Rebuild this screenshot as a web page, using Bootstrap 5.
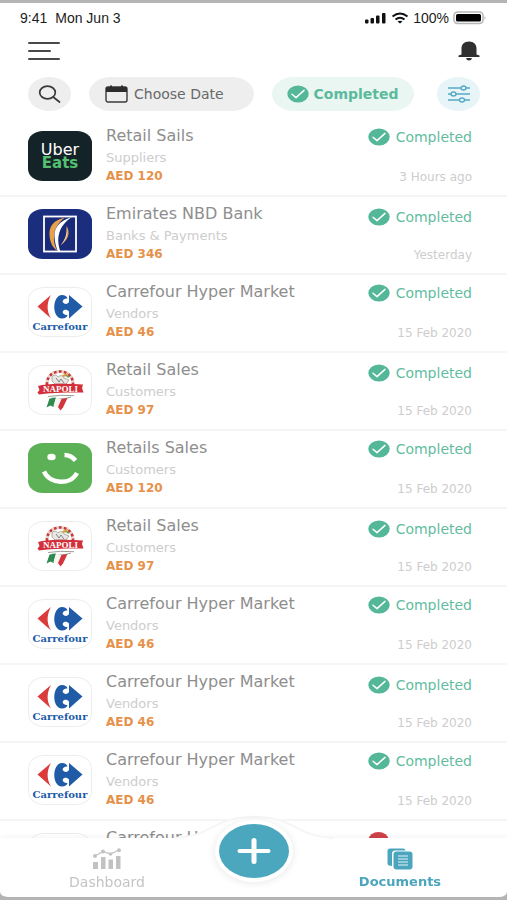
<!DOCTYPE html>
<html lang="en">
<head>
<meta charset="utf-8">
<meta name="viewport" content="width=device-width, initial-scale=1">
<title>Documents</title>
<link href="https://cdn.jsdelivr.net/npm/bootstrap@5.3.0/dist/css/bootstrap.min.css" rel="stylesheet">
<style>
  body { font-family: "DejaVu Sans", Inter, sans-serif; background: #b4b4b4; color: #7d7d7d; }
  svg { display: block; flex: none; }
  .screen { border-top: 3px solid #b4b4b4; }
  .statusbar { font: 14px/20px "Liberation Sans", Arial, sans-serif; color: #1c1c1c; padding: 5px 20px 0; }
  .topbar { padding: 12px 27px 0 28px; height: 42px; }
  .filters { padding: 7px 27px 8px 28px; gap: 18px; }
  .pill { border: 0; height: 34px; border-radius: 22px / 17px; background: #eeeeee; font-size: 14px; line-height: 20px; white-space: nowrap; }
  .pill-round { width: 43px; }
  .pill-date { width: 165px; color: #686868; gap: 6px; padding: 0 16px; }
  .pill-done { width: 142px; background: #e9f6f2; color: #5cba9c; font-weight: 600; gap: 4px; }
  .pill-tune { background: #e8f5f8; }
  .doc { height: 78px; padding: 7px 35px 0 28px; gap: 14px; border-bottom: 2px solid #f5f5f5; }
  .logo { margin-top: 5px; }
  .doc-title { font-size: 16px; line-height: 20px; color: #8e8e8e; }
  .doc-kind { font-size: 13px; line-height: 18px; margin-top: 3px; color: #cdcdcd; }
  .doc-sum { font-size: 12px; line-height: 18px; font-weight: 600; color: #e6914a; }
  .doc-state { font-size: 14px; line-height: 20px; margin-top: 1px; gap: 6px; color: #62bd9f; }
  .doc:nth-child(even) .doc-state { margin-top: 3px; margin-bottom: -2px; }
  .doc-date { font-size: 12px; line-height: 18px; margin-top: 21px; color: #cdcdcd; }
  .state-off { width: 104px; }
  .tabs { height: 62px; background: #fff; border-bottom: 3px solid #b4b4b4; border-radius: 0 0 8px 8px; box-shadow: 0 -2px 5px rgba(0,0,0,.04); }
  .backing { height: 62px; background: #b4b4b4; }
  .tab { padding-top: 10px; font-size: 14px; line-height: 18px; color: #c4c4c4; gap: 3px; }
  .tab.on { color: #4ba5bd; font-size: 13px; font-weight: 600; }
  .slot { width: 79px; }
  .bulge { left: 50%; top: -24px; transform: translateX(-50%); }
  .add { left: 50%; top: -14px; transform: translateX(-50%); width: 70px; height: 54px; border-radius: 50%; background: #4ba7be; box-shadow: 0 0 0 4px #fff, 0 1px 7px 5px rgba(0,0,0,.08); z-index: 2; }
</style>
<script src="https://cdn.jsdelivr.net/npm/bootstrap@5.3.0/dist/js/bootstrap.bundle.min.js"></script>
</head>
<body>

<svg class="d-none" aria-hidden="true">
  <symbol id="tick" viewBox="0 0 22 18">
    <ellipse cx="11" cy="9" rx="10.7" ry="8.6" fill="#54b798"/>
    <path d="M5 9.2 9 12.6 17 5.4" fill="none" stroke="#fff" stroke-width="1.5" stroke-linecap="round" stroke-linejoin="round"/>
  </symbol>
  <symbol id="uber" viewBox="0 0 64 50">
    <rect width="64" height="50" rx="15" ry="12" fill="#142328"/>
    <text x="32" y="24" text-anchor="middle" font-size="16" fill="#fff">Uber</text>
    <text x="32" y="37" text-anchor="middle" font-size="15" font-weight="700" fill="#55c070">Eats</text>
  </symbol>
  <symbol id="enbd" viewBox="0 0 64 50">
    <rect width="64" height="50" rx="15" ry="12" fill="#1b2e7e"/>
    <rect x="16" y="7.5" width="32" height="35" fill="#182a78" stroke="#fff" stroke-width="1.8"/>
    <path d="M37 8.500C25 11 21 18 21.500 26C22 34 25 39 29.500 42C24 32 24 18 37 8.500Z" fill="#e8a04a"/>
    <path d="M44 8C30 12 26 20 26.500 28C27 34 28 38 30 42.500H32.500C28 30 30 17 44 8Z" fill="#fff"/>
    <path d="M38.500 17C43 24 40 31 32.500 36.500C38 30 39.500 25 38.500 17Z" fill="#e8a04a"/>
    <path d="M38.500 17C39.500 25 37 31 32.500 36.500C37 32 41 27 38.500 17Z" fill="#f6dfc4"/>
  </symbol>
  <symbol id="carrefour" viewBox="0 0 64 50">
    <rect x=".5" y=".5" width="63" height="49" rx="15" ry="12" fill="#fff" stroke="#ececec"/>
    <path d="M23 8 9.500 19.500 23 31.500C18.500 24 18.500 16 23 8Z" fill="#dc3b3b"/>
    <path d="M34 8C24 8 23.500 31.500 34 31.500C37 31.500 39 30 39.500 28C36 28 34 26 35 24C36.500 22 39.500 22.500 41 24.500V31.500L54.500 19.500 41 8V15C39.500 17.500 36.500 17.500 35 15.500C34 13.500 36 11.500 39.500 11.500C39 9.500 37 8 34 8Z" fill="#205ba8"/>
    <text x="32" y="43" text-anchor="middle" font-family="'DejaVu Serif', 'Liberation Serif', serif" font-size="10" font-weight="700" fill="#205ba8">Carrefour</text>
  </symbol>
  <symbol id="napoli" viewBox="0 0 64 50">
    <rect x=".5" y=".5" width="63" height="49" rx="15" ry="12" fill="#fff" stroke="#ececec"/>
    <path d="M19 20C18 2 46 2 45 20" fill="none" stroke="#e9cfc4" stroke-width="3"/>
    <path d="M19 20C18 2 46 2 45 20" fill="none" stroke="#c8353c" stroke-width="2.600" stroke-dasharray="2.600 2.400"/>
    <path d="M24 12c2-3 5-2 6 0 2-2 5-2 6 1l5 2-3 4H27l-3-3z" fill="#e9e7e3" stroke="#9c9c98" stroke-width=".8"/>
    <path d="M28 13l3 4 2-3 3 4" fill="none" stroke="#777" stroke-width=".9"/>
    <path d="M34 10l6-2-1 3-4 1z" fill="#d9a13c"/><path d="M37 10l5 1-2 2z" fill="#69994e"/>
    <path d="M10 21 14 20C27 18.500 40 18.500 55 19.500L54 23 55.500 27.500C40 27.500 27 27.500 11 29.500L9.500 27.500 11.500 25Z" fill="#d32f3a"/>
    <text x="32.500" y="26.500" text-anchor="middle" font-family="'Liberation Serif', serif" font-size="9" font-weight="700" fill="#fff">NAPOLI</text>
    <path d="M20 31.500q12-2 26-.8M24 33q11 2 19-1" fill="none" stroke="#9aa094" stroke-width="1"/>
    <path d="M21.500 33.500 28 32.500 25.500 42 22.500 40.500 18.500 42.500Z" fill="#2f8a50"/>
    <path d="M28 32.500 34 34 31.500 43 25.500 41Z" fill="#f6f4f0"/>
    <path d="M33.500 34 39.500 33 35 42.500 32.500 45.500 30 42Z" fill="#d3353d"/>
  </symbol>
  <symbol id="careem" viewBox="0 0 64 50">
    <rect width="64" height="50" rx="15" ry="12" fill="#5cb157"/>
    <ellipse cx="23.500" cy="14" rx="4.200" ry="3.300" fill="#fff"/>
    <path d="M36.500 12Q43 12 47.500 17.500" fill="none" stroke="#fff" stroke-width="4.400"/>
    <path d="M16 28.500C22 42 43 42 49 30" fill="none" stroke="#fff" stroke-width="4.400"/>
  </symbol>
</svg>

<div class="screen bg-white vh-100 overflow-hidden d-flex flex-column">
  <header>
    <div class="statusbar d-flex justify-content-between align-items-center">
      <div class="d-flex gap-2"><span>9:41</span><span>Mon Jun 3</span></div>
      <div class="d-flex align-items-center gap-1">
        <svg width="22" height="12" viewBox="0 0 22 12" fill="#111"><rect x="0" y="7.500" width="3.500" height="4" rx="1"/><rect x="5.500" y="6" width="3.500" height="5.500" rx="1"/><rect x="11" y="3.500" width="3.500" height="8" rx="1"/><rect x="17" y="1" width="3.500" height="10.500" rx="1"/></svg>
        <svg width="18" height="12" viewBox="0 0 18 12" fill="none" stroke="#111" stroke-width="2"><path d="M1.500 4.500Q9-1.500 16.500 4.500M4.500 7.500Q9 4 13.500 7.500"/><path d="M6.500 9.500 9 11.500 11.500 9.500Q9 8 6.500 9.500Z" fill="#111" stroke="none"/></svg>
        <span>100%</span>
        <svg width="34" height="14" viewBox="0 0 34 14"><rect x="1" y="1" width="29" height="11.500" rx="3.500" fill="#fff" stroke="#b5b5b5" stroke-width="1.500"/><rect x="3" y="3" width="25" height="7.500" rx="1.500" fill="#000"/><path d="M31.500 5v4q2-2 0-4" fill="#b5b5b5"/></svg>
      </div>
    </div>
    <div class="topbar d-flex justify-content-between align-items-start">
      <button class="btn p-0 border-0" type="button" aria-label="Menu"><svg width="32" height="22" viewBox="0 0 32 22" stroke="#484848" stroke-width="2" stroke-linecap="round"><path d="M1 3H31M1 11H22M1 19H31"/></svg></button>
      <button class="btn p-0 border-0" type="button" aria-label="Notifications"><svg width="22" height="22" viewBox="0 0 22 22" fill="#303030"><path d="M11 1.500C6 1.500 3.500 4.500 3.500 8.500V14.500L.5 15.500V17H21.500V15.500L18.500 14.500V8.500C18.500 4.500 16 1.500 11 1.500Z"/><path d="M8 18H14Q13.500 20.500 11 20.500T8 18Z"/></svg></button>
    </div>
    <div class="filters d-flex">
      <button class="pill pill-round d-flex align-items-center justify-content-center p-0" type="button" aria-label="Search"><svg width="23" height="18" viewBox="0 0 23 18" fill="none" stroke="#3a3a3a" stroke-width="1.700" stroke-linecap="round"><ellipse cx="9.500" cy="7.500" rx="7.800" ry="6.400"/><path d="M15.200 12 21.500 17"/></svg></button>
      <button class="pill pill-date d-flex align-items-center" type="button"><svg width="23" height="18" viewBox="0 0 23 18"><rect x="1" y="2" width="21" height="15" rx="2" fill="none" stroke="#3a3a3a" stroke-width="1.400"/><path d="M1 3Q1 2 3 2H20Q22 2 22 3V7H1Z" fill="#2d2d2d"/><path d="M6 .5V3M17 .5V3" stroke="#2d2d2d" stroke-width="2"/></svg>Choose Date</button>
      <button class="pill pill-done d-flex align-items-center justify-content-center p-0" type="button"><svg width="22" height="18"><use href="#tick"/></svg>Completed</button>
      <button class="pill pill-round pill-tune ms-auto d-flex align-items-center justify-content-center p-0" type="button" aria-label="Filters"><svg width="22" height="18" viewBox="0 0 22 18" fill="#e8f5f8" stroke="#55a9c4" stroke-width="1.400"><path d="M0 3H22M0 9H22M0 15H22"/><ellipse cx="15.500" cy="3" rx="2.500" ry="2"/><ellipse cx="5.500" cy="9" rx="2.500" ry="2"/><ellipse cx="14" cy="15" rx="2.500" ry="2"/></svg></button>
    </div>
  </header>

  <main class="flex-grow-1 overflow-hidden">
    <ul class="list-unstyled m-0">
      <li class="doc d-flex"><svg class="logo" width="64" height="50"><use href="#uber"/></svg><div class="flex-grow-1"><div class="doc-title">Retail Sails</div><div class="doc-kind">Suppliers</div><div class="doc-sum">AED 120</div></div><div class="text-end"><div class="doc-state d-flex align-items-center"><svg width="22" height="18"><use href="#tick"/></svg>Completed</div><div class="doc-date">3 Hours ago</div></div></li>
      <li class="doc d-flex"><svg class="logo" width="64" height="50"><use href="#enbd"/></svg><div class="flex-grow-1"><div class="doc-title">Emirates NBD Bank</div><div class="doc-kind">Banks &amp; Payments</div><div class="doc-sum">AED 346</div></div><div class="text-end"><div class="doc-state d-flex align-items-center"><svg width="22" height="18"><use href="#tick"/></svg>Completed</div><div class="doc-date">Yesterday</div></div></li>
      <li class="doc d-flex"><svg class="logo" width="64" height="50"><use href="#carrefour"/></svg><div class="flex-grow-1"><div class="doc-title">Carrefour Hyper Market</div><div class="doc-kind">Vendors</div><div class="doc-sum">AED 46</div></div><div class="text-end"><div class="doc-state d-flex align-items-center"><svg width="22" height="18"><use href="#tick"/></svg>Completed</div><div class="doc-date">15 Feb 2020</div></div></li>
      <li class="doc d-flex"><svg class="logo" width="64" height="50"><use href="#napoli"/></svg><div class="flex-grow-1"><div class="doc-title">Retail Sales</div><div class="doc-kind">Customers</div><div class="doc-sum">AED 97</div></div><div class="text-end"><div class="doc-state d-flex align-items-center"><svg width="22" height="18"><use href="#tick"/></svg>Completed</div><div class="doc-date">15 Feb 2020</div></div></li>
      <li class="doc d-flex"><svg class="logo" width="64" height="50"><use href="#careem"/></svg><div class="flex-grow-1"><div class="doc-title">Retails Sales</div><div class="doc-kind">Customers</div><div class="doc-sum">AED 120</div></div><div class="text-end"><div class="doc-state d-flex align-items-center"><svg width="22" height="18"><use href="#tick"/></svg>Completed</div><div class="doc-date">15 Feb 2020</div></div></li>
      <li class="doc d-flex"><svg class="logo" width="64" height="50"><use href="#napoli"/></svg><div class="flex-grow-1"><div class="doc-title">Retail Sales</div><div class="doc-kind">Customers</div><div class="doc-sum">AED 97</div></div><div class="text-end"><div class="doc-state d-flex align-items-center"><svg width="22" height="18"><use href="#tick"/></svg>Completed</div><div class="doc-date">15 Feb 2020</div></div></li>
      <li class="doc d-flex"><svg class="logo" width="64" height="50"><use href="#carrefour"/></svg><div class="flex-grow-1"><div class="doc-title">Carrefour Hyper Market</div><div class="doc-kind">Vendors</div><div class="doc-sum">AED 46</div></div><div class="text-end"><div class="doc-state d-flex align-items-center"><svg width="22" height="18"><use href="#tick"/></svg>Completed</div><div class="doc-date">15 Feb 2020</div></div></li>
      <li class="doc d-flex"><svg class="logo" width="64" height="50"><use href="#carrefour"/></svg><div class="flex-grow-1"><div class="doc-title">Carrefour Hyper Market</div><div class="doc-kind">Vendors</div><div class="doc-sum">AED 46</div></div><div class="text-end"><div class="doc-state d-flex align-items-center"><svg width="22" height="18"><use href="#tick"/></svg>Completed</div><div class="doc-date">15 Feb 2020</div></div></li>
      <li class="doc d-flex"><svg class="logo" width="64" height="50"><use href="#carrefour"/></svg><div class="flex-grow-1"><div class="doc-title">Carrefour Hyper Market</div><div class="doc-kind">Vendors</div><div class="doc-sum">AED 46</div></div><div class="text-end"><div class="doc-state d-flex align-items-center"><svg width="22" height="18"><use href="#tick"/></svg>Completed</div><div class="doc-date">15 Feb 2020</div></div></li>
      <li class="doc d-flex"><svg class="logo" width="64" height="50"><use href="#carrefour"/></svg><div class="flex-grow-1"><div class="doc-title">Carrefour Hyper Market</div></div><div class="doc-state state-off d-flex align-items-start"><svg width="22" height="18" viewBox="0 0 22 18"><ellipse cx="10.500" cy="9" rx="10" ry="8" fill="#cf4248"/></svg></div></li>
    </ul>
  </main>
</div>

<div class="backing fixed-bottom"></div>
<nav class="tabs fixed-bottom d-flex" aria-label="Main">
  <svg class="bulge position-absolute" width="160" height="62" viewBox="0 0 160 62"><path d="M0 24C40 22 38 3 80 3S120 22 160 24" fill="#fff" stroke="#f6f6f6" stroke-width="2"/><path d="M0 25H160V61H0Z" fill="#fff"/></svg>
  <a href="#dashboard" class="tab position-relative flex-fill w-50 d-flex flex-column align-items-center text-decoration-none"><svg width="30" height="22" viewBox="0 0 30 22" fill="#c2c2c2"><path d="M1 14H6V21H1ZM9 9H13.500V21H9ZM16.500 11.500H21V21H16.500ZM24 8H28.500V21H24Z"/><path d="M3 8 11 3.500 18.500 6 27 2" fill="none" stroke="#c2c2c2" stroke-width="1.200"/><circle cx="3" cy="8" r="2"/><circle cx="11" cy="3.500" r="2"/><circle cx="18.500" cy="6" r="1.800"/><circle cx="27" cy="2.300" r="2"/></svg>Dashboard</a>
  <div class="slot flex-shrink-0"></div>
  <a href="#documents" class="tab on position-relative flex-fill w-50 d-flex flex-column align-items-center text-decoration-none" aria-current="page"><svg width="26" height="22" viewBox="0 0 26 22"><path d="M2 17.500Q.5 17 .5 15V3Q.5.5 3 .5H16Q18.500.5 18.500 2.500H8Q5 2.500 5 6V18Z" fill="#4ba5bd"/><rect x="6.500" y="3.500" width="19" height="18" rx="3" fill="#4ba5bd"/><path d="M11 8H21M11 11H21M11 14H21M11 17H21" stroke="#e6f4f7" stroke-width="1.200"/></svg>Documents</a>
  <button class="add btn p-0 border-0 position-absolute d-flex align-items-center justify-content-center" type="button" aria-label="Add document"><svg width="34" height="26" viewBox="0 0 34 26" stroke="#fff" stroke-linecap="round"><path d="M2.500 13H31.500" stroke-width="4"/><path d="M17 2.500V23.500" stroke-width="5"/></svg></button>
</nav>
</body>
</html>
